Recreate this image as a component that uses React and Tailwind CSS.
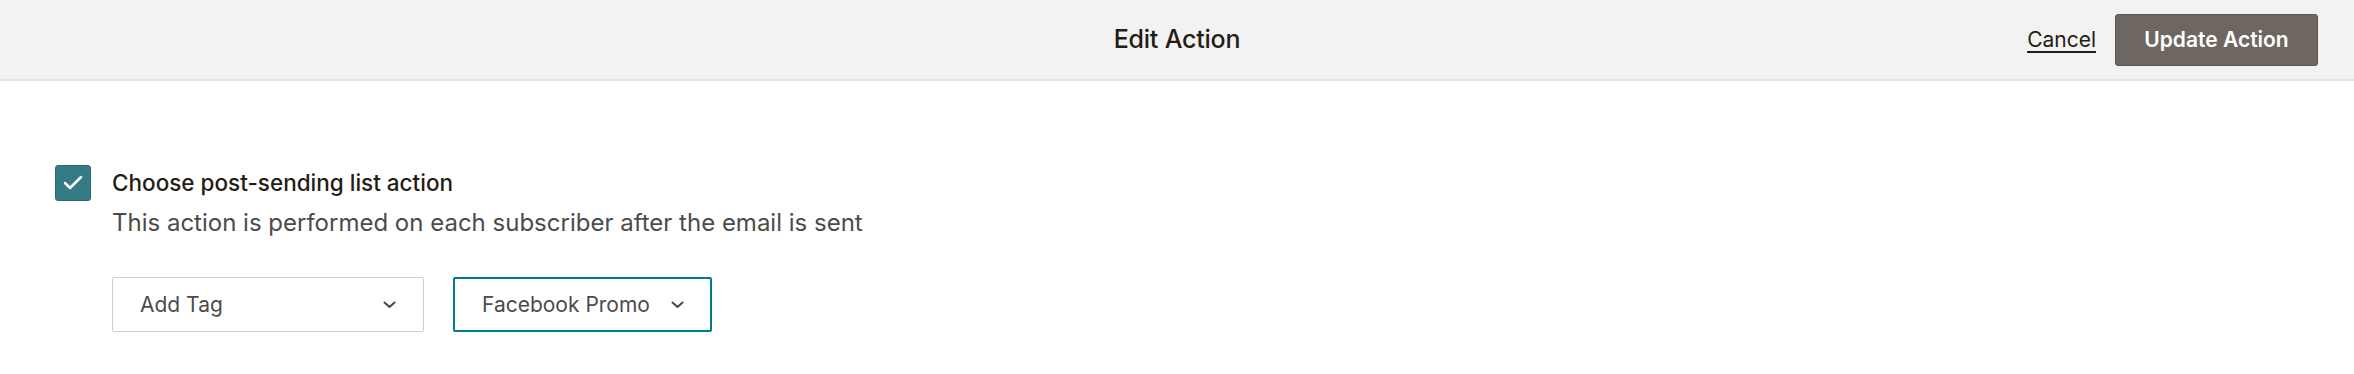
import { Check } from "lucide-react";

function Chevron() {
  return (
    <svg width="13" height="8" viewBox="0 0 13 8" fill="none" className="shrink-0">
      <path d="M1.5 1.5l5 4.5 5-4.5" stroke="#4a4a4a" strokeWidth="2" strokeLinecap="round" strokeLinejoin="round" />
    </svg>
  );
}

export default function App() {
  return (
    <div
      className="w-[2354px] h-[374px] bg-white text-[#241c15]"
      style={{ fontFamily: "Inter, 'Noto Sans', sans-serif" }}
    >
      <header className="h-[81px] bg-[#f2f2f2] border-b-2 border-[#e3e3e3] grid grid-cols-[1fr_auto_1fr] items-center">
        <div />
        <h1 className="text-[25px] font-medium tracking-[-0.2px] text-[#241c15]">Edit Action</h1>
        <div className="flex items-center justify-end gap-[19px] pr-[36px]">
          <a href="#" className="text-[21px] underline underline-offset-[4px] text-[#241c15]">
            Cancel
          </a>
          <button className="w-[203px] h-[52px] rounded-[3px] bg-[#6e6761] border border-[#5c5650] text-white text-[21px] font-semibold">
            Update Action
          </button>
        </div>
      </header>

      <main className="pt-[84px] pl-[55px]">
        <div className="flex items-start gap-[21px]">
          <span className="w-[36px] h-[36px] rounded-[3px] bg-[#357b85] border border-[#2a6a73] flex items-center justify-center shrink-0">
            <Check size={24} strokeWidth={2.5} color="white" />
          </span>
          <div>
            <div className="text-[22.5px] leading-[36px] font-medium text-[#241c15]">
              Choose post-sending list action
            </div>
            <div className="text-[24px] leading-[36px] mt-[4px] text-[#4b4b4b]">
              This action is performed on each subscriber after the email is sent
            </div>
            <div className="flex gap-[29px] mt-[36px]">
              <div className="w-[312px] h-[55px] border border-[#cfcfcf] rounded-[2px] flex items-center justify-between pl-[27px] pr-[27px]">
                <span className="text-[21px] text-[#4b4b4b]">Add Tag</span>
                <Chevron />
              </div>
              <div className="w-[259px] h-[55px] border-2 border-[#007c89] rounded-[2px] flex items-center gap-[21px] pl-[27px]">
                <span className="text-[21px] text-[#4b4b4b]">Facebook Promo</span>
                <Chevron />
              </div>
            </div>
          </div>
        </div>
      </main>
    </div>
  );
}
